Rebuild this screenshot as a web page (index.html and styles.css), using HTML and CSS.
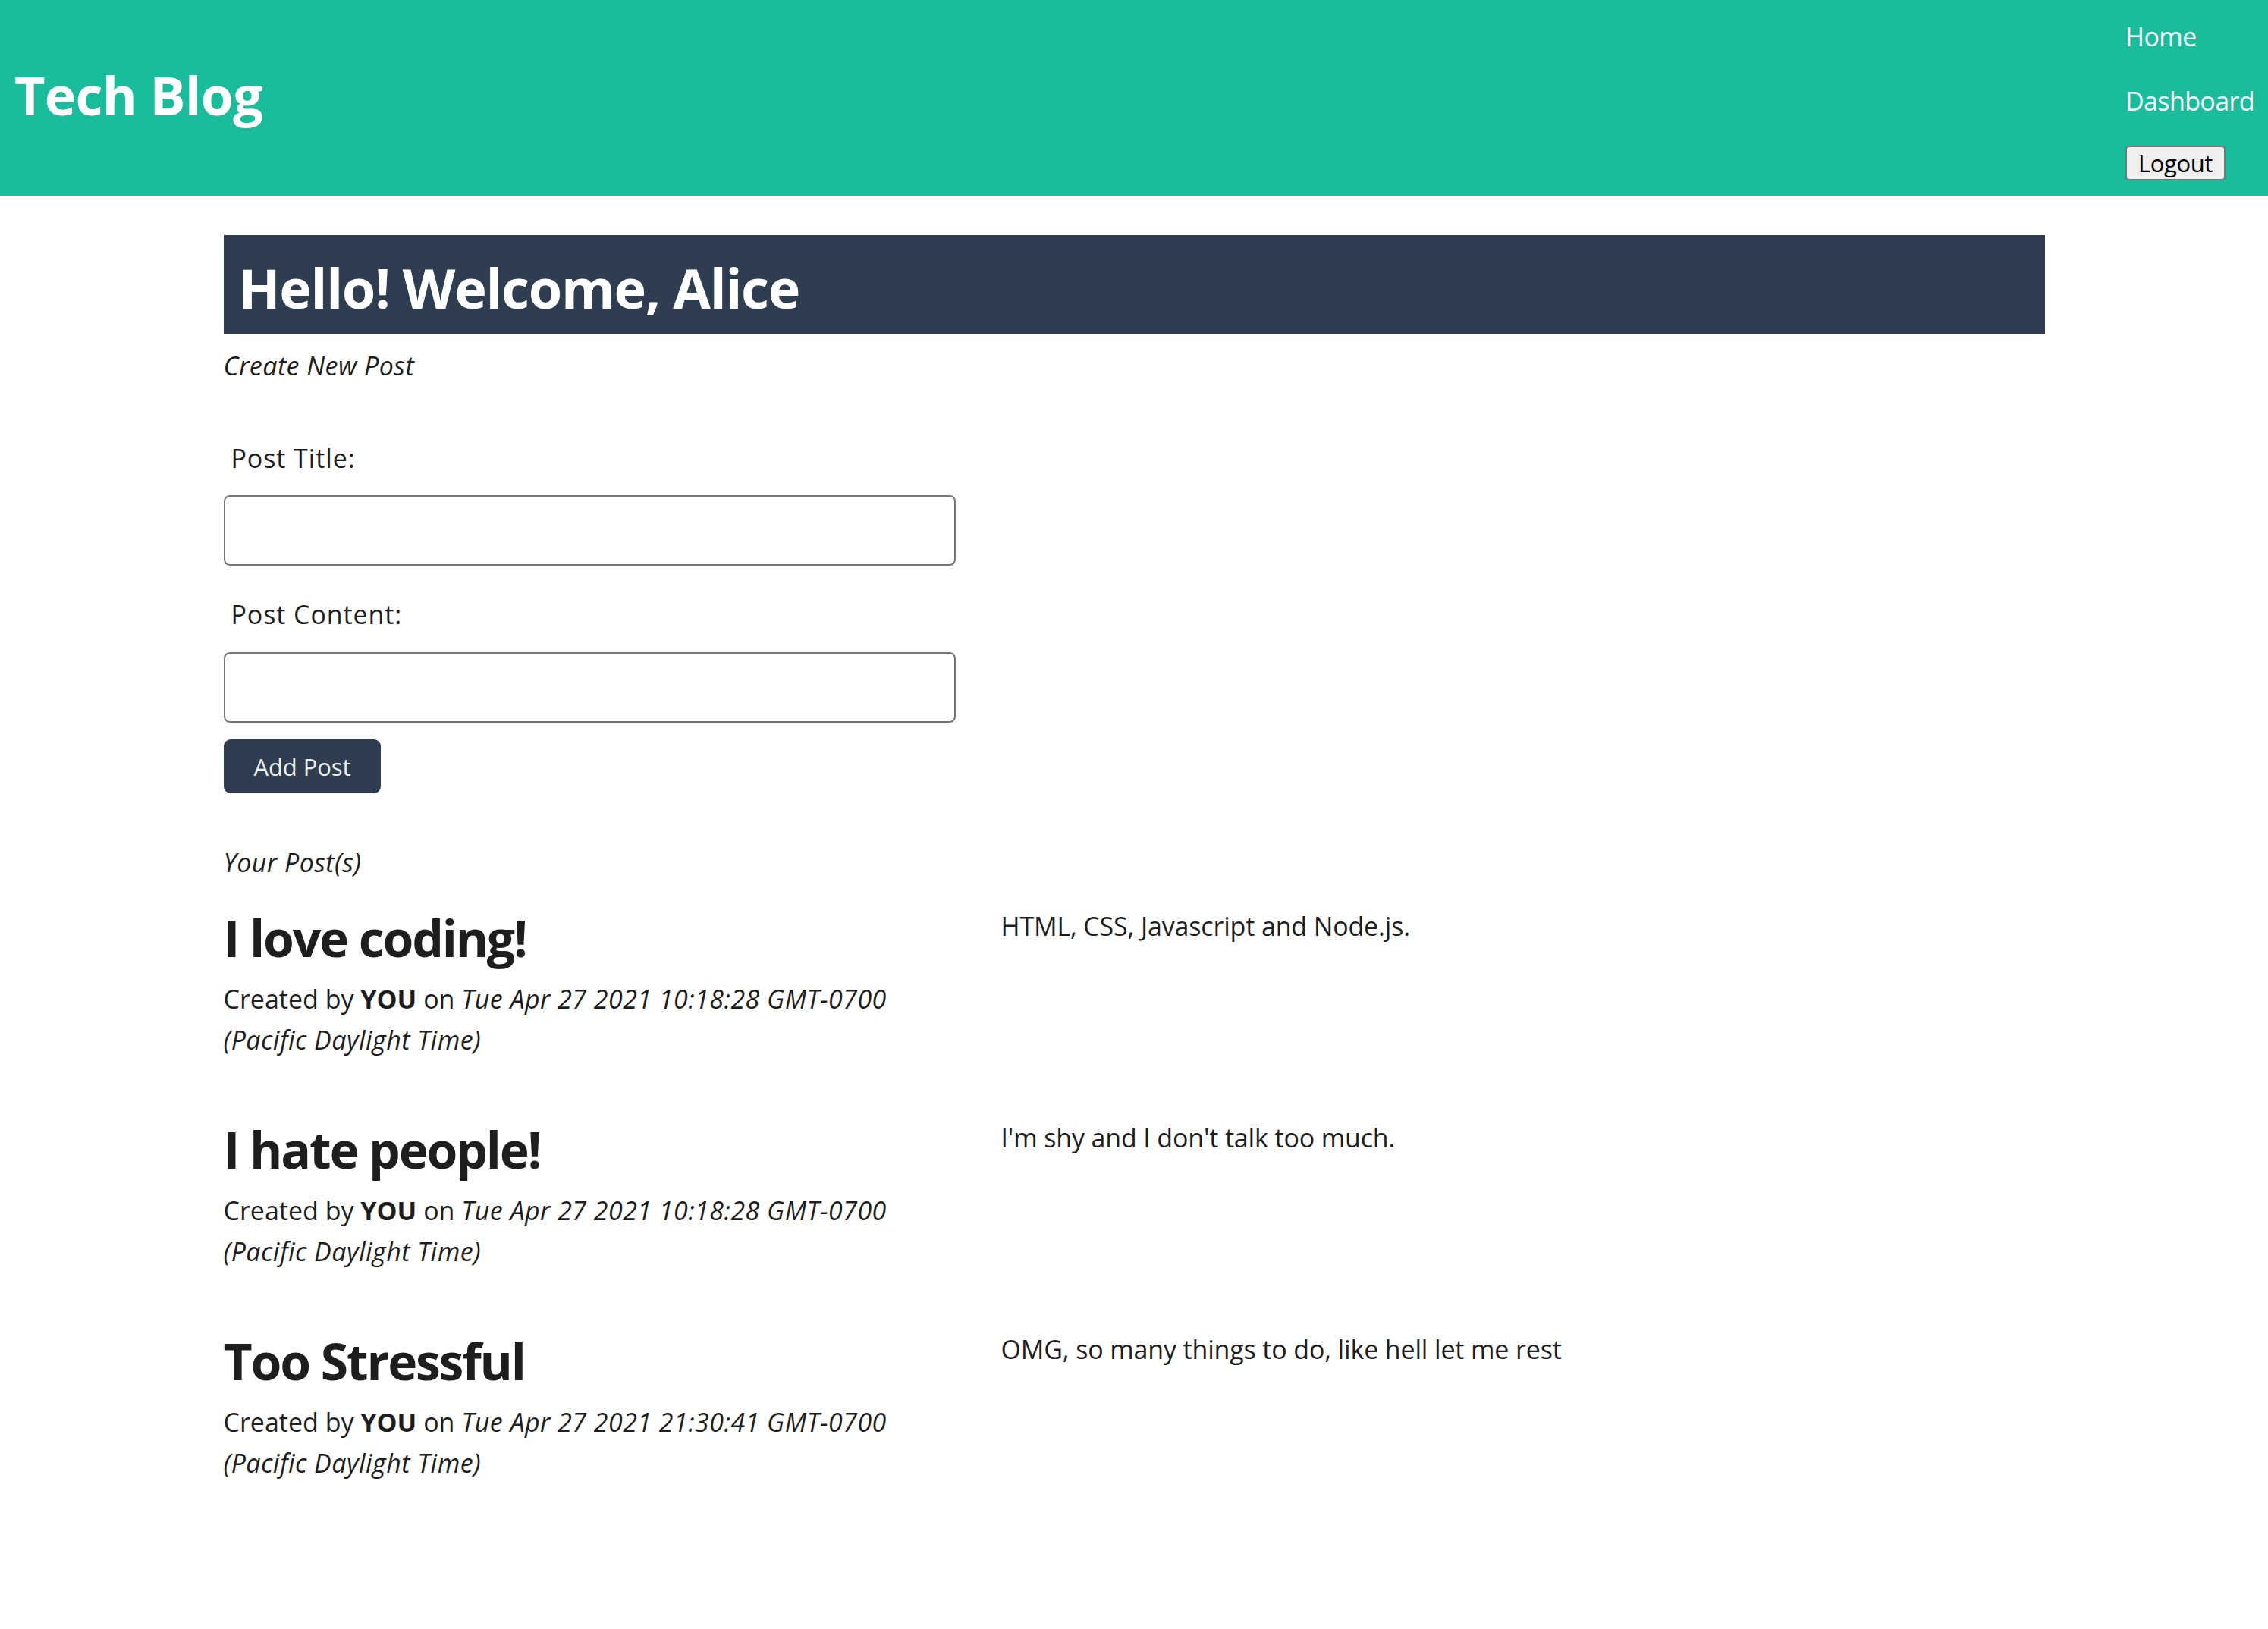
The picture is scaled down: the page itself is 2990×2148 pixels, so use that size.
FILE: index.html
```html
<!DOCTYPE html>
<html lang="en">
<head>
<meta charset="utf-8">
<title>Tech Blog</title>
<link rel="stylesheet" href="styles.css">
</head>
<body>
<header class="site-header">
  <h1 class="brand">Tech Blog</h1>
  <nav class="nav">
    <a class="nav-link" href="#">Home</a>
    <a class="nav-link" href="#">Dashboard</a>
    <button class="logout" type="button">Logout</button>
  </nav>
</header>
<main class="container">
  <div class="welcome"><h2 class="welcome-title">Hello! Welcome, Alice</h2></div>
  <p class="section-label first">Create New Post</p>
  <form class="post-form">
    <label class="field-label title-label" for="t">Post Title:</label>
    <input class="field-input" id="t" type="text">
    <label class="field-label content-label" for="c">Post Content:</label>
    <input class="field-input second" id="c" type="text">
    <button class="add-btn" type="button">Add Post</button>
  </form>
  <p class="section-label posts-label">Your Post(s)</p>
  <section class="posts">
    <article class="post">
      <div class="post-head">
        <h3 class="post-title">I love coding!</h3>
        <p class="post-meta">Created by <b>YOU</b> on <i>Tue Apr 27 2021 10:18:28 GMT-0700 (Pacific Daylight Time)</i></p>
      </div>
      <p class="post-body">HTML, CSS, Javascript and Node.js.</p>
    </article>
    <article class="post">
      <div class="post-head">
        <h3 class="post-title">I hate people!</h3>
        <p class="post-meta">Created by <b>YOU</b> on <i>Tue Apr 27 2021 10:18:28 GMT-0700 (Pacific Daylight Time)</i></p>
      </div>
      <p class="post-body">I'm shy and I don't talk too much.</p>
    </article>
    <article class="post">
      <div class="post-head">
        <h3 class="post-title">Too Stressful</h3>
        <p class="post-meta">Created by <b>YOU</b> on <i>Tue Apr 27 2021 21:30:41 GMT-0700 (Pacific Daylight Time)</i></p>
      </div>
      <p class="post-body">OMG, so many things to do, like hell let me rest</p>
    </article>
  </section>
</main>
</body>
</html>
```
FILE: styles.css
```css
* { box-sizing: border-box; }

body {
  margin: 0;
  font-family: "Open Sans", "Noto Sans", sans-serif;
  font-size: 34px;
  line-height: 54px;
  color: #1e1e1e;
  background: #ffffff;
}

.site-header {
  height: 258px;
  background: #1abc9c;
  display: flex;
  justify-content: space-between;
  align-items: center;
  padding: 0 18px 0 19px;
}

.brand {
  margin: 0 0 8px;
  font-size: 70px;
  line-height: 84px;
  font-weight: 700;
  color: #ffffff;
  letter-spacing: -0.7px;
}

.nav {
  align-self: stretch;
  display: flex;
  flex-direction: column;
  align-items: flex-start;
  gap: 33px;
  padding: 22px 0 20px;
}

.nav-link {
  color: #ffffff;
  text-decoration: none;
  font-size: 34px;
  line-height: 52px;
  letter-spacing: -0.6px;
}

.logout {
  height: 46px;
  padding: 0 15px;
  font-family: "Open Sans", "Noto Sans", sans-serif;
  font-size: 31px;
  line-height: 40px;
  letter-spacing: -0.4px;
  color: #000000;
  background: #efefef;
  border: 2px solid #767676;
  border-radius: 5px;
}

.container {
  width: 2401px;
  margin: 0 auto;
  padding: 52px 0 80px;
}

.welcome {
  height: 130px;
  background: #2e3e50;
  padding: 8px 20px 0;
}

.welcome-title {
  margin: 0;
  font-size: 72px;
  line-height: 122px;
  font-weight: 700;
  color: #ffffff;
  letter-spacing: -1.3px;
}

.section-label {
  margin: 0;
  font-style: italic;
  letter-spacing: 0.45px;
}

.section-label.first { margin-top: 15px; }
.section-label.posts-label { margin-top: 64px; }

.post-form {
  width: 965px;
  display: flex;
  flex-direction: column;
  align-items: flex-start;
}

.field-label {
  padding-left: 10px;
  letter-spacing: 0.9px;
}

.title-label { margin-top: 68px; }
.content-label { margin-top: 37px; }

.field-input {
  width: 100%;
  height: 93px;
  margin-top: 22px;
  border: 2px solid #767676;
  border-radius: 8px;
  background: #ffffff;
  font-size: 34px;
}

.field-input.second { margin-top: 23px; }

.add-btn {
  margin-top: 22px;
  height: 71px;
  padding: 0 40px;
  border: none;
  border-radius: 9px;
  background: #2e3e50;
  color: #ecf0f1;
  font-family: "Open Sans", "Noto Sans", sans-serif;
  font-size: 31px;
  letter-spacing: -0.1px;
}

.posts {
  margin-top: 33px;
}

.post {
  display: grid;
  grid-template-columns: 960px 1fr;
  column-gap: 65px;
  align-items: start;
  margin-bottom: 78px;
}

.post-title {
  margin: 0;
  font-size: 66px;
  line-height: 79px;
  font-weight: 700;
  letter-spacing: -2.2px;
}

.post-meta {
  margin: 14px 0 0;
}

.post-meta b { font-weight: 700; }

.post-meta i { letter-spacing: 0.45px; }

.post-body {
  margin: -3px 0 0;
  letter-spacing: -0.15px;
}
```
